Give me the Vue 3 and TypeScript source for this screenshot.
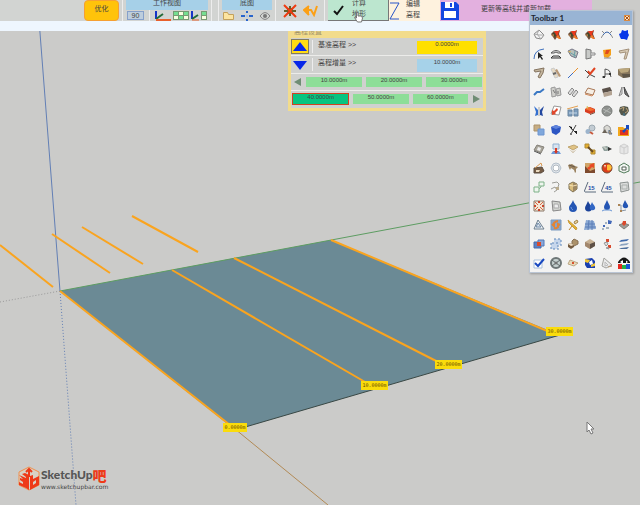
<script setup lang="ts">
import { ref } from 'vue'

// One stroke or area of an icon: path, fill, stroke, stroke width
type Shape = [string, string, string?, number?]
interface Tool { name: string; shapes: Shape[]; text?: string }

const N = 'none'

const rock: Shape[] = [
  ['M1 5 L4 2 L6 4 L10 1 L9 5 L11 10 L7 8 L5 11 L3 8 Z', '#6b4a34'],
  ['M4 2 L8 2 L10 1 L8 5 L10 9 L6 6 Z', '#e8381c'],
  ['M3 4 L5 4 L6 7 L3 8 Z', '#3f4a2c'],
  ['M8 6 L11 10 L9 10 L6 8 Z', '#f07a28'],
  ['M1 6 L4 5 L4 8 Z', '#a87848'],
]
const drop = 'M6 0 C7 4 10 5 10 8 A4 4 0 0 1 2 8 C2 5 5 4 6 0 Z'

const tools: Tool[] = [
  { name: 'Mesh', shapes: [['M1 5 L6 1 L11 6 L8 10 L3 9 Z', '#f4f4f4', '#888', 1], ['M1 5 L6 6 L11 6 M6 1 L4 5 L8 10', N, '#aaa', 1]] },
  { name: 'Rock', shapes: rock },
  { name: 'Rock split', shapes: rock },
  { name: 'Rock merge', shapes: rock },
  { name: 'Bridge arc', shapes: [['M2 6 Q6 0 10 6', N, '#3864a8', 1], ['M1 2 L3 4 M11 2 L9 4 M2 6 L0 9 M10 6 L12 9', N, '#888', 1]] },
  { name: 'Blue surface', shapes: [['M4 1 L7 2 L10 1 L10 4 L11 6 L10 8 L9 11 L6 10 L3 10 L2 8 L1 5 L3 4 Z', '#0838e8']] },
  { name: 'Arc select', shapes: [['M1 11 Q1 2 11 1', N, '#3f70bd', 1], ['M5 4 L5 11 L7 9 L9 12 L10 11 L8 8 L10 8 Z', '#222']] },
  { name: 'Double arc', shapes: [['M1 5 Q6 0 11 5 L8 5 Q6 3 4 5 Z', '#eee', '#555', 1], ['M1 10 L3 8 H9 L11 10 Z', '#ddd', '#333', 1]] },
  { name: 'Leaf mesh', shapes: [['M1 3 L5 1 L11 4 L9 10 L4 8 Z', '#b9c0bb', '#778', 1], ['M2 4 L9 8 M8 3 L7 9', N, '#6ba0a8', 1], ['M1 3 L4 3 L3 5 Z', '#dcb45c']] },
  { name: 'Panel', shapes: [['M2 1 L7 2 L7 10 L2 11 Z', '#c8cac8', '#777', 1], ['M7 5 L11 5 L11 7 L7 7', '#eee', '#888', 1]] },
  { name: 'Figure', shapes: [['M2 2 L10 1 L10 7 L7 10 L3 9 Z', '#f4a01c'], ['M5 2 L9 2 L7 6 L4 6 Z', '#e04a1e'], ['M3 10 L10 10', N, '#888', 1]] },
  { name: 'Angle', shapes: [['M1 3 L11 1 L8 11 L6 11 L8 4 L2 5 Z', '#d8cbb5', '#a3917a', 1]] },
  { name: 'Pipe', shapes: [['M1 3 L11 1 L10 6 L7 11 L5 10 L8 4 L2 5 Z', '#c4b69e', '#857460', 1]] },
  { name: 'Strips', shapes: [['M1 2 L4 1 L8 10 L5 11 Z', '#e8dcc4', '#ccc', 1], ['M5 3 L7 2 L11 9 L9 10 Z', '#b89876'], ['M3 7 L6 6', N, '#666', 2]] },
  { name: 'Line', shapes: [['M1 11 L6 6', N, '#3a6bc4', 1], ['M6 6 L11 1', N, '#e8902c', 1]] },
  { name: 'Trim', shapes: [['M1 3 L5 7 L11 10 M6 7 L3 11', N, '#444', 1], ['M4 4 L6 7 L11 1', N, '#e04422', 2]] },
  { name: 'Profile', shapes: [['M4 10 V2 Q10 3 9 7 H4 M4 10 H1 M9 7 L10 10', N, '#555', 1], ['M2 9 H4 V11 H2 Z M8 6 H10 V8 H8 Z', '#333']] },
  { name: 'Terrain block', shapes: [['M0 2 L12 1 L12 10 L5 11 L0 8 Z', '#87765c'], ['M0 2 L12 1 L10 5 L3 6 Z', '#bba77c'], ['M4 7 L12 7 L12 10 L5 11 Z', '#5f5648']] },
  { name: 'Wave', shapes: [['M1 9 L4 6 L7 6 L11 3', N, '#3a78c4', 2]] },
  { name: 'Documents', shapes: [['M1 2 L5 1 L6 10 L2 11 Z M6 3 L10 2 L11 9 L7 10 Z', '#d0d0cc', '#999', 1], ['M3 4 L5 7 M8 5 L8 8', N, '#777', 1]] },
  { name: 'Planks', shapes: [['M1 7 L5 2 L7 4 L3 9 Z M5 9 L9 4 L11 6 L7 11 Z', '#ddd', '#888', 1]] },
  { name: 'Slab', shapes: [['M4 2 L11 4 L9 9 L1 7 Z', '#f6eee4', '#a87858', 1], ['M1 8 L8 10 L10 8', N, '#d08858', 1]] },
  { name: 'Solid', shapes: [['M1 3 L9 1 L11 5 L2 7 Z', '#5a5048'], ['M2 7 L11 5 L11 9 L3 11 Z', '#b3a392']] },
  { name: 'Mirror', shapes: [['M4 1 L1 10 L4 8 Z', '#ddd', '#888', 1], ['M6 1 L7 8 L11 11 Z', '#777', '#444', 1]] },
  { name: 'Butterfly', shapes: [['M1 1 L5 5 L5 10 L2 11 L3 7 Z', '#3470d0'], ['M11 1 L7 5 L7 10 L10 11 L9 7 Z', '#2348a0'], ['M6 2 L6 11', N, '#aaa', 1]] },
  { name: 'Place', shapes: [['M4 1 L11 2 L9 10 L1 9 Z', '#fff', '#999', 1], ['M2 10 L2 5 L4 6 L7 3 L8 5 L5 8 L6 9 Z', '#e0482c']] },
  { name: 'Towers', shapes: [['M1 5 H5 V11 H1 Z M7 4 H11 V11 H7 Z', '#7d9dbd', '#6a86a0', 1], ['M0 4 L11 1', N, '#e2a052', 1], ['M2 8 H10', N, '#c6d8e8', 1]] },
  { name: 'Roof', shapes: [['M1 4 L6 2 L11 4 L11 7 L6 9 L1 7 Z', '#d83c20'], ['M1 4 L5 2 L11 5 L6 6 Z', '#f26f2f'], ['M6 9 L11 7 L11 8 L6 10 Z', '#774632'], ['M2 2 L4 1 L4 4 Z', '#d9be61']] },
  { name: 'Stone ball', shapes: [['M6 1 A5 5 0 1 1 6 11 A5 5 0 1 1 6 1 Z', '#8e918e', '#7a7d7a', 1], ['M2 4 L10 8 M3 8 L9 3', N, '#b7bab7', 1]] },
  { name: 'Grown ball', shapes: [['M6 1 L10 2 L11 6 L9 9 L7 11 L3 10 L1 6 L2 2 Z', '#55594c'], ['M2 4 L6 2 L5 6 M8 3 L10 6 L7 8', N, '#b9a178', 1], ['M6 8 L6 11', N, '#3f7fa0', 1]] },
  { name: 'Paste', shapes: [['M1 1 H7 V7 H1 Z', '#c6ad84', '#ab926a', 1], ['M5 5 H11 V11 H5 Z', '#80a8dc', '#6e96d0', 1]] },
  { name: 'Shield', shapes: [['M1 3 L6 1 L11 3 L10 8 L6 11 L2 9 Z', '#2c56c4'], ['M1 3 L6 1 L11 3 L6 5 Z', '#5f84dc']] },
  { name: 'Cut', shapes: [['M2 2 L10 10 M9 1 L4 10', N, '#444', 1], ['M2 2 L5 3 L5 6 Z M7 7 H10 V10 Z', '#222'], ['M3 9 H5 V11 H3 Z', '#777']] },
  { name: 'Spheres', shapes: [['M8 1 A3 3 0 1 1 8 7 A3 3 0 1 1 8 1 Z', '#c3ccd3', '#9eaab2', 1], ['M4 5 A2 2 0 1 1 4 10 A2 2 0 1 1 4 5 Z', '#9cb4cc'], ['M6 8 L9 10', N, '#c8593c', 2]] },
  { name: 'Pair', shapes: [['M6 1 L9 3 L10 7 L6 9 L3 7 L3 3 Z', '#d8d8d3', '#999', 1], ['M1 9 L4 5 L6 9 Z', '#6a6258'], ['M8 6 L11 10 L8 10 Z', '#d8a64c', '#63748f', 1]] },
  { name: 'Import', shapes: [['M0 3 H5 L6 4 H11 V12 H0 Z', '#f3a81c'], ['M2 6 H10 V11 H2 Z', '#e2351c'], ['M8 1 H11 V6 L9 5 L6 9 L4 7 L8 4 Z', '#174bc0']] },
  { name: 'Tile', shapes: [['M4 2 L11 4 L8 10 L1 7 Z', '#aaa69b', '#85827a', 1], ['M5 4 L8 5 L7 8 L4 7 Z', '#eee'], ['M1 8 L8 11', N, '#555', 1]] },
  { name: 'Push down', shapes: [['M3 1 H9 V6 H3 Z', '#d8e4f1', '#8fb0d0', 1], ['M1 11 L3 8 H9 L11 11 Z', '#6e9ad8'], ['M5 5 H7 V8 H8 L6 11 L4 8 H5 Z', '#d93a22']] },
  { name: 'Layers', shapes: [['M1 4 L7 2 L11 4 L6 7 Z', '#dfc284', '#c1a670', 1], ['M2 6 L6 9 L10 6 L6 10 Z', '#b9a37d']] },
  { name: 'Scale', shapes: [['M1 1 H5 V5 H1 Z M7 7 H11 V11 H7 Z', '#e3ac2c', '#af8a34', 1], ['M4 4 L9 9', N, '#694c22', 2]] },
  { name: 'Flow', shapes: [['M1 4 L6 3 L10 6 L6 8 L3 8 Z', '#8f9f9b'], ['M1 3 L6 5 L5 7 Z', '#c7cbc4'], ['M7 4 L11 6 L7 8 Z', '#333']] },
  { name: 'White cube', shapes: [['M2 3 L6 1 L10 3 L10 10 L6 11 L2 10 Z', '#e6e6e6', '#cfcfcf', 1], ['M2 3 L6 5 L10 3 M6 5 V11', N, '#ccc', 1]] },
  { name: 'Drawer', shapes: [['M1 6 L9 5 L11 9 L8 11 H1 Z', '#755c45', '#5b4c40', 1], ['M2 6 L8 1 L9 4', N, '#d99850', 1], ['M3 8 L7 8 L6 10 H3 Z', '#eadac0']] },
  { name: 'Ring', shapes: [['M6 1 L9 2 L11 6 L9 10 L6 11 L3 10 L1 6 L3 2 Z', '#e4e9ee', '#b4bfca', 1], ['M6 3 A3 3 0 1 1 6 9 A3 3 0 1 1 6 3 Z', '#fff', '#b0b8c0', 1]] },
  { name: 'Horse', shapes: [['M1 3 L5 2 L8 4 L11 5 L9 7 L9 10 L8 11 L7 8 L4 6 L3 8 L2 6 Z', '#9c8462'], ['M2 3 L8 5', N, '#6a5b49', 1]] },
  { name: 'Texture', shapes: [['M1 1 H11 V11 H1 Z', '#d0a468'], ['M1 4 L6 9 L11 7 V11 H1 Z', '#7d4a2f'], ['M5 3 L10 1 L10 6 L8 5 L5 8 L3 6 L6 4 Z', '#e84a25']] },
  { name: 'Fire ball', shapes: [['M6 1 A5 5 0 1 1 6 11 A5 5 0 1 1 6 1 Z', '#dc3d1b', '#73492f', 1], ['M6 3 A3 3 0 1 1 6 8 Z', '#ffbf36'], ['M3 3 L5 3 L4 6 Z', '#f5e6c6']] },
  { name: 'Hex box', shapes: [['M1 4 L6 1 L11 4 V9 L6 11 L1 9 Z', '#f0f4f0', '#547d5d', 1], ['M4 5 H8 V8 H4 Z', '#fff', '#525e54', 1]] },
  { name: 'Boxes', shapes: [['M6 1 H11 V5 H6 Z M1 6 H6 V11 H1 Z', '#eef5ee', '#7db187', 1], ['M6 8 L8 6 V5', N, '#8ab191', 1]] },
  { name: 'Curves', shapes: [['M2 2 L7 1 L9 3 L8 6 M1 8 L5 6 L7 9 L4 11', N, '#9c9c96', 1], ['M6 6 H9 V9 H6 Z', '#b9ab8d']] },
  { name: 'Wood ball', shapes: [['M6 1 L10 3 V8 L6 11 L2 8 V3 Z', '#d9bd7e', '#7c7055', 1], ['M6 1 V11 L10 8 V3 Z', '#9d8762'], ['M2 4 L6 5 L10 4', N, '#f3deb0', 1]] },
  { name: 'Slope 15', shapes: [['M0 11 L4 1 M1 11 H12', N, '#5a6a7d', 1]], text: '15' },
  { name: 'Slope 45', shapes: [['M0 11 L4 1 M1 11 H12', N, '#5a6a7d', 1]], text: '45' },
  { name: 'Wire box', shapes: [['M2 2 L10 1 L11 9 L3 11 Z', '#dcdedd', '#8c9290', 1], ['M4 4 H9 V8 H4 Z', N, '#abb0ad', 1]] },
  { name: 'Explode', shapes: [['M1 1 H11 V11 H1 Z', '#f3e7d6', '#8b7969', 1], ['M2 2 L5 5 M10 2 L7 5 M2 10 L5 7 M10 10 L7 7', N, '#d66a49', 1], ['M5 1 H7 V3 H5 Z M5 9 H7 V11 H5 Z M1 5 H3 V7 H1 Z M9 5 H11 V7 H9 Z', '#c8452c']] },
  { name: 'Sheet', shapes: [['M2 1 L10 2 L11 10 L3 11 Z', '#d4d6d2', '#888', 1], ['M4 4 L8 4 L9 8 L4 8 Z', '#eee', '#aaa', 1]] },
  { name: 'Drop', shapes: [[drop, '#2456b4'], ['M4 7 Q4 9 6 10', N, '#6f9ae0', 1]] },
  { name: 'Drops', shapes: [['M4 1 C5 4 8 6 8 8 A3 3 0 0 1 1 8 C1 6 3 4 4 1 Z', '#1c439a'], ['M8 2 C9 5 12 6 11 9 A3 3 0 0 1 6 9 C5 7 7 5 8 2 Z', '#3267c5']] },
  { name: 'Drop on ground', shapes: [['M6 0 C7 3 9 5 9 7 A3 3 0 0 1 3 7 C3 5 5 3 6 0 Z', '#2456b4'], ['M1 11 L3 10 H9 L11 11', N, '#6794d4', 1]] },
  { name: 'Drop path', shapes: [['M7 0 C8 3 11 5 10 7 A3 3 0 0 1 5 7 C4 5 6 3 7 0 Z', '#2456b4'], ['M1 5 L3 5 L3 11 L8 10', N, '#8896a6', 1], ['M0 4 H2 V6 H0 Z M2 10 H4 V12 H2 Z', '#aa8456']] },
  { name: 'Triangulate', shapes: [['M5 1 L11 10 L1 10 Z', '#f0f4f6', '#6e8090', 1], ['M5 4 L8 8 L3 8 Z', '#dde6ee', '#6e88a7', 1]] },
  { name: 'Swap', shapes: [['M1 1 H11 V11 H1 Z', '#86a5c9', '#7d9bc0', 1], ['M2 5 L4 7 L4 4 Q6 2 8 2 M10 6 L8 5 L8 8 Q6 10 4 9', N, '#e38434', 2]] },
  { name: 'Hammer', shapes: [['M1 1 L10 9 L9 11 L2 4 Z', '#e5b32e', '#c89b3e', 1], ['M7 3 L10 1 L11 3 L8 5 Z', '#ead69e', '#a2834b', 1], ['M2 11 L5 7', N, '#bd8732', 1]] },
  { name: 'Grid', shapes: [['M2 1 L10 2 L12 10 L0 11 Z', '#8ba9d3'], ['M1 5 L11 5 M1 8 L12 8 M5 1 L4 11 M8 1 L8 11', N, '#5d7fb8', 1]] },
  { name: 'Scatter', shapes: [['M7 1 L11 2 L10 5 L7 5 Z M2 6 H4 V8 H2 Z', '#4268b8'], ['M1 9 H3 V11 H1 Z M5 8 H8 V10 H5 Z M4 3 H6 V5 H4 Z', '#a8b4be']] },
  { name: 'Stamp', shapes: [['M1 6 L6 4 L11 6 L6 10 Z', '#9c9c97', '#808078', 1], ['M5 2 H8 V5 L6 7 L4 5 Z', '#da4a2c']] },
  { name: 'Overlap', shapes: [['M1 4 H8 V10 H1 Z', '#5c81c4', '#466aaa', 1], ['M5 2 H11 V8 H5 Z', '#88a6d8', '#5378b8', 1], ['M4 4 H8 V8 H4 Z', '#d84b2b']] },
  { name: 'Dashed overlap', shapes: [['M4 1 H11 V7 H8 V11 H1 V5 H4 Z', '#c6d6ec'], ['M4 1 H6 M8 1 H10 M11 2 V4 M11 6 V8 M1 5 V7 M1 9 V11 M3 11 H5 M7 11 H9 M2 5 H4 M6 5 H8 M8 7 V9', N, '#5d86ba', 1]] },
  { name: 'Crates', shapes: [['M7 1 L11 3 V6 L7 8 L5 7 V3 Z', '#ab916a', '#887154', 1], ['M3 5 L7 7 V9 L4 11 L1 9 V6 Z', '#745b41'], ['M1 6 L3 5 L7 7 L4 8 Z', '#ebdac0']] },
  { name: 'Cube', shapes: [['M1 4 L6 1 L11 4 V8 L6 11 L1 8 Z', '#c7b194'], ['M6 6 L11 4 V8 L6 11 Z', '#5d5046'], ['M1 4 L6 6 V11 L1 8 Z', '#a2876d']] },
  { name: 'Beads', shapes: [['M5 1 H8 V4 H5 Z M7 7 H10 V10 H7 Z', '#d94a2d'], ['M3 5 L6 4 L7 6 L5 8 Z M5 10 L7 9 L8 11 Z', '#ddd', '#999', 1]] },
  { name: 'Stack', shapes: [['M3 2 L11 1 L9 3 L1 4 Z', '#416bab'], ['M3 6 L11 5 L9 7 L1 8 Z', '#8ba3bf'], ['M3 10 L11 9 L9 11 L1 11 Z', '#4d6f9c']] },
  { name: 'Check', shapes: [['M1 3 H9 V11 H1 Z', '#fff', '#a9c0dc', 1], ['M2 6 L5 9 L11 2', N, '#1848c0', 2]] },
  { name: 'Rosette', shapes: [['M6 1 A5 5 0 1 1 6 11 A5 5 0 1 1 6 1 Z', '#c5d0cf', '#6d7676', 2], ['M2 3 L10 9 M10 3 L2 9', N, '#5d6666', 1], ['M6 5 A1 1 0 1 1 6 7 A1 1 0 1 1 6 5 Z', '#eee', '#555', 1]] },
  { name: 'Card', shapes: [['M3 3 L11 6 L7 9 L1 7 Z', '#e8d9b9', '#baa684', 1], ['M5 5 H7 V7 H5 Z', '#d8512e']] },
  { name: 'Picture', shapes: [['M1 2 L8 1 L11 4 V11 H3 L1 8 Z', '#1a40b0'], ['M1 2 L6 3 L4 6 L1 5 Z M7 8 L11 6 V9 L7 10 Z', '#f3c633'], ['M5 5 L8 3 L9 7 L6 8 Z', '#fff']] },
  { name: 'Set square', shapes: [['M3 1 L11 8 L5 11 L1 9 Z', '#eaeaea', '#a2a29e', 1], ['M4 5 L7 8 L4 9 Z', N, '#bbb', 1], ['M7 10 L11 9', N, '#b89672', 1]] },
  { name: 'Colour eye', shapes: [['M0 5 Q6 -4 12 5 V6 H0 Z', '#161616'], ['M2 5 Q6 1 10 5 Q6 8 2 5 Z', '#fff'], ['M5 3 H8 V6 H5 Z', '#111'], ['M0 7 H4 V12 H0 Z', '#e42a20'], ['M4 8 H8 V12 H4 Z', '#24b348'], ['M8 7 H12 V12 H8 Z', '#1b56d8']] },
]

const contourLines = [
  'M0 245 L53 287', 'M52 234 L110 273', 'M82 227 L143 264', 'M132 216 L198 252',
  'M60 291 L235 429', 'M172 270 L372 386', 'M234 258 L442 364', 'M331 240 L552 333',
]
const tags = [
  { x: 223, y: 423, w: 24, text: '0.0000m' },
  { x: 361, y: 381, w: 27, text: '10.0000m' },
  { x: 435, y: 360, w: 27, text: '20.0000m' },
  { x: 546, y: 327, w: 27, text: '30.0000m' },
]

const angle = ref('90')
const base = ref('0.0000m')
const step = ref('10.0000m')
const selected = ref('40.0000m')
</script>

<template>
  <main class="app">
    <svg class="scene" viewBox="0 0 640 505" preserveAspectRatio="xMidYMid slice">
      <path d="M60 291 L0 302" class="dotted grey" />
      <path d="M60 291 L76 505" class="dotted blue" />
      <path d="M39 20 L60 291" class="axis blue" />
      <path d="M235 429 L328 505" class="axis brown" />
      <path d="M60 291 L331 240 L560 335 L235 430 Z" fill="#6b8a95" />
      <path d="M560 335 L235 430" class="axis edge" />
      <path d="M60 291 L640 182" class="axis green" />
      <path v-for="line in contourLines" :key="line" :d="line" class="contour" />
      <g v-for="tag in tags" :key="tag.text">
        <rect :x="tag.x" :y="tag.y" :width="tag.w" height="9" fill="#fadc0c" />
        <text :x="tag.x + tag.w / 2" :y="tag.y + 6" class="tag">{{ tag.text }}</text>
      </g>
      <path d="M587 422 V432 L589 430 L591 434 L593 433 L591 429 H594 Z" fill="#fff" stroke="#777" />
    </svg>

    <header class="ribbon">
      <button class="optimise">优化</button>
      <i class="sep"></i>
      <section class="group views">
        <h2>工作视图</h2>
        <div class="icons">
          <input v-model="angle" aria-label="视角" class="angle" />
          <i class="sep"></i>
          <button aria-label="坐标轴">
            <svg width="16" height="10" viewBox="0 0 16 10"><path d="M1 0 V8" stroke="#1634c8" stroke-width="2" /><path d="M1 8 L8 3" stroke="#236b3a" stroke-width="2" /><path d="M1 9 H16" stroke="#e8602c" stroke-width="2" /></svg>
          </button>
          <button aria-label="四视图">
            <svg width="16" height="10" viewBox="0 0 16 10"><path d="M0 0 H16 V9 H0 Z" fill="#789a74" /><path d="M1 1 H5 V4 H1 Z M11 1 H15 V4 H11 Z M6 5 H10 V8 H6 Z" fill="#75df91" /><path d="M6 1 H10 V4 H6 Z M1 5 H5 V8 H1 Z M11 5 H15 V8 H11 Z" fill="#f9ffe2" /></svg>
          </button>
          <button aria-label="局部坐标轴">
            <svg width="8" height="10" viewBox="0 0 8 10"><path d="M1 0 V8" stroke="#1634c8" stroke-width="2" /><path d="M1 8 L7 4" stroke="#236b3a" stroke-width="2" /><path d="M1 9 H8" stroke="#e8602c" /></svg>
          </button>
          <button aria-label="双视图">
            <svg width="6" height="10" viewBox="0 0 6 10"><path d="M0 0 H6 V9 H0 Z" fill="#789a74" /><path d="M1 1 H5 V4 H1 Z" fill="#75df91" /><path d="M1 5 H5 V8 H1 Z" fill="#f9ffe2" /></svg>
          </button>
        </div>
      </section>
      <i class="sep"></i>
      <i class="sep"></i>
      <section class="group basemap">
        <h2>底图</h2>
        <div class="icons">
          <button aria-label="打开">
            <svg width="11" height="9" viewBox="0 0 11 9"><path d="M0.5 8.5 V1.5 H4.5 L5.5 3.5 H10.5 V8.5 Z" fill="#fce4a0" stroke="#c3a15c" /></svg>
          </button>
          <button aria-label="定位">
            <svg width="12" height="10" viewBox="0 0 12 10"><path d="M0 5 H4 M8 5 H12 M6 0 V2 M6 8 V10" stroke="#2864cc" stroke-width="2" /><path d="M5 4 H7 V6 H5 Z" fill="#a9c2e8" /></svg>
          </button>
          <button aria-label="显示">
            <svg width="12" height="10" viewBox="0 0 12 10"><path d="M1 5 Q6 -2 11 5 Q6 12 1 5 Z" fill="none" stroke="#858585" /><circle cx="6" cy="5" r="2" fill="#777" /></svg>
          </button>
        </div>
      </section>
      <i class="sep"></i>
      <button class="action" aria-label="清除">
        <svg width="14" height="14" viewBox="0 0 14 14"><path d="M4 4 H10 V10 H4 Z" fill="#3e5c31" /><path d="M1 7 H13 M7 2 V12" stroke="#66602a" stroke-width="2" /><path d="M1 1 L13 13 M13 1 L1 13" stroke="#ee3b12" stroke-width="2" /></svg>
      </button>
      <button class="action" aria-label="返回">
        <svg width="16" height="12" viewBox="0 0 16 12"><path d="M6 1 L1 5 L6 10 M2 5 H8 L11 10 L14 1" fill="none" stroke="#fca016" stroke-width="2" /><path d="M1 5 L6 1 V10 Z" fill="#fca016" /></svg>
      </button>
      <i class="sep"></i>
      <button class="wide compute">
        <svg width="11" height="11" viewBox="0 0 11 11"><path d="M1 6 L4 9 L10 1" fill="none" stroke="#121212" stroke-width="2" /></svg>
        <span>计算<br />地形</span>
        <svg class="hand" width="9" height="12" viewBox="0 0 9 12"><path d="M2.5 7 V1.5 H4 V5 H7.5 L8.5 7 L7.5 11 H3.5 L0.5 6.5 Z" fill="#fff" stroke="#777" /></svg>
      </button>
      <button class="wide edit">
        <svg width="11" height="18" viewBox="0 0 11 18"><path d="M1 1 H10 L1 17 H10" fill="none" stroke="#2854c8" /></svg>
        <span>编辑<br />高程</span>
      </button>
      <button class="reload">
        <svg width="18" height="18" viewBox="0 0 18 18"><path d="M0 0 H15 L18 3 V18 H0 Z" fill="#1446e0" /><path d="M4 0 H13 V6 H4 Z M3 9 H15 V16 H3 Z" fill="#fff" /><path d="M9 1 H11 V5 H9 Z" fill="#1446e0" /></svg>
        <span>更新等高线并重新加载</span>
      </button>
    </header>

    <form class="panel" @submit.prevent>
      <h2>高程设置</h2>
      <div class="fields">
        <div class="field">
          <button type="button" class="up" aria-label="升高"><svg width="14" height="10" viewBox="0 0 14 10"><path d="M7 0 L14 9 H0 Z" fill="#0726e8" /></svg></button>
          <i class="sep"></i>
          <label for="base">基准高程 &gt;&gt;</label>
          <input id="base" v-model="base" class="base" />
        </div>
        <div class="field">
          <button type="button" aria-label="降低"><svg width="14" height="10" viewBox="0 0 14 10"><path d="M7 10 L14 1 H0 Z" fill="#0726e8" /></svg></button>
          <i class="sep"></i>
          <label for="step">高程增量 &gt;&gt;</label>
          <input id="step" v-model="step" class="step" />
        </div>
        <div class="chips">
          <button type="button" class="arrow" aria-label="上一页"><svg width="7" height="8" viewBox="0 0 7 8"><path d="M7 0 V8 L0 4 Z" fill="#6f8d74" /></svg></button>
          <button v-for="v in ['10.0000m', '20.0000m', '30.0000m']" :key="v" type="button" class="chip" :class="{ on: selected === v }" @click="selected = v">{{ v }}</button>
        </div>
        <div class="chips">
          <button v-for="v in ['40.0000m', '50.0000m', '60.0000m']" :key="v" type="button" class="chip" :class="{ on: selected === v }" @click="selected = v">{{ v }}</button>
          <button type="button" class="arrow" aria-label="下一页"><svg width="7" height="8" viewBox="0 0 7 8"><path d="M0 0 V8 L7 4 Z" fill="#6f8d74" /></svg></button>
        </div>
      </div>
    </form>

    <aside class="toolbox">
      <header>
        <h2>Toolbar 1</h2>
        <button class="close" aria-label="Close"><svg width="4" height="4" viewBox="0 0 4 4"><path d="M0 0 L4 4 M4 0 L0 4" stroke="#a4501c" /></svg></button>
      </header>
      <div class="tools">
        <button v-for="tool in tools" :key="tool.name" :aria-label="tool.name">
          <svg width="12" height="12" viewBox="0 0 12 12">
            <path v-for="(s, i) in tool.shapes" :key="i" :d="s[0]" :fill="s[1]" :stroke="s[2] ?? 'none'" :stroke-width="s[3] ?? 0" />
            <text v-if="tool.text" x="4" y="9" class="num">{{ tool.text }}</text>
          </svg>
        </button>
      </div>
    </aside>

    <footer class="brand">
      <svg width="22" height="25" viewBox="0 0 22 25">
        <path d="M11 1 L21 6 V19 L11 24 L1 19 V6 Z" fill="#d8d3c6" stroke="#f0904c" />
        <path d="M1 9 L8 12 V22 L1 19 V16 L5 18 V16 L2 14 V12 L5 13 Z" fill="#ee3a18" />
        <path d="M4 8 L7 7 L11 9 V24 L8 22 V11 Z" fill="#ee3a18" />
        <path d="M12 24 V10 L15 9 V13 L21 10 V19 Z M15 16 V19 L18 17 V14 Z" fill="#ee3a18" fill-rule="evenodd" />
        <path d="M11 11 V4 M8 6 L11 3 L14 6" fill="none" stroke="#ee3a18" stroke-width="2" />
      </svg>
      <div>
        <p class="name">SketchUp<b>吧</b></p>
        <p class="site">www.sketchupbar.com</p>
      </div>
    </footer>
  </main>
</template>

<style>
body {
  margin: 0;
}
</style>

<style scoped>
.app {
  position: relative;
  display: flex;
  flex-direction: column;
  min-height: 100vh;
  overflow: hidden;
  background: #cbcbc9;
  color: #444;
  font-family: "Liberation Sans", "Noto Sans CJK SC", sans-serif;
  font-size: 7px;
}
h2, p {
  margin: 0;
  font-size: inherit;
  font-weight: 400;
}
button, input {
  box-sizing: border-box;
  margin: 0;
  padding: 0;
  border: 0;
  background: none;
  color: inherit;
  font: inherit;
}
svg {
  display: block;
}
.scene {
  position: absolute;
  inset: 0;
  width: 100%;
  height: 100%;
}
.axis, .dotted, .contour {
  fill: none;
  stroke-width: 1;
}
.dotted {
  stroke-dasharray: 1 2;
}
.blue {
  stroke: #627fb5;
}
.grey {
  stroke: #999;
}
.brown {
  stroke: #b28a55;
}
.green {
  stroke: #5d9d62;
}
.edge {
  stroke: #394845;
}
.contour {
  stroke: #faa41e;
  stroke-width: 2;
}
.tag {
  fill: #6a4b00;
  font-family: "DejaVu Sans Mono", monospace;
  font-size: 5px;
  text-anchor: middle;
}

.ribbon {
  position: relative;
  display: flex;
  height: 21px;
  margin-right: 48px;
  padding-left: 84px;
  border-bottom: 10px solid #eef6fe;
  background: #d2d4d2;
}
.sep {
  flex: none;
  width: 1px;
  margin: 0 3px;
  background: #ededed;
}
.optimise {
  width: 35px;
  padding-bottom: 5px;
  border: 1px solid #f6a032;
  border-radius: 4px;
  background: #ffc30a;
}
.group h2 {
  height: 10px;
  background: #a6d0e8;
  line-height: 6px;
  text-align: center;
}
.views {
  width: 82px;
}
.basemap {
  width: 50px;
}
.icons {
  display: flex;
  align-items: center;
  justify-content: space-between;
  height: 11px;
  padding: 0 1px;
}
.icons .sep {
  align-self: stretch;
}
.angle {
  width: 17px;
  height: 9px;
  border: 1px solid #86a0ca;
  background: #bdcddd;
  line-height: 7px;
  text-align: center;
}
.action {
  display: grid;
  place-items: center;
  width: 21px;
}
.wide {
  position: relative;
  display: flex;
  align-items: center;
  line-height: 11px;
}
.wide span {
  height: 26px;
}
.compute {
  width: 61px;
  gap: 8px;
  padding-left: 5px;
  border-right: 1px solid #777;
  border-bottom: 1px solid #777;
  background: #bce6cf;
}
.hand {
  position: absolute;
  top: 11px;
  left: 26px;
}
.edit {
  width: 51px;
  gap: 6px;
  background: #fef2de;
}
.reload {
  display: flex;
  flex: 1;
  align-items: center;
  gap: 22px;
  padding-left: 1px;
  background: #e3b0df;
}
.reload span {
  padding-bottom: 5px;
}

.panel {
  position: absolute;
  top: 31px;
  left: 45%;
  box-sizing: border-box;
  width: 198px;
  padding: 0 3px 3px;
  background: #f2dc8c;
}
.panel h2 {
  height: 7px;
  padding-left: 3px;
  overflow: hidden;
  color: #a3946a;
  line-height: 1px;
}
.fields {
  padding-bottom: 1px;
  background: #d0d1cf;
}
.field {
  display: flex;
  height: 17px;
  border-bottom: 1px solid #ececea;
}
.field button {
  display: grid;
  place-items: center;
  width: 18px;
}
.field .up {
  margin: 1px 0;
  border: 1px solid #827b5e;
  background: #ffdc12;
}
.field .sep {
  margin: 2px 3px;
}
.field label {
  flex: 1;
  padding-left: 2px;
  line-height: 13px;
}
.field input {
  width: 60px;
  height: 13px;
  margin: 3px 6px 0 0;
  padding-bottom: 7px;
  font-size: 6px;
  text-align: center;
}
.field .base {
  background: #ffe000;
}
.field .step {
  background: #a6d2e9;
}
.chips {
  display: flex;
  align-items: center;
  gap: 4px;
  height: 16px;
  padding: 0 1px 0 2px;
  border-bottom: 1px solid #ececea;
}
.chips:last-child {
  padding: 0 2px 0 1px;
  border: 0;
}
.arrow {
  display: grid;
  place-items: center;
  width: 9px;
}
.chip {
  flex: 1;
  height: 10px;
  padding-bottom: 4px;
  background: #8dde98;
  font-size: 6px;
  line-height: 6px;
}
.chip.on {
  height: 12px;
  border: 1px solid #d34220;
  background: #08c480;
}

.toolbox {
  position: absolute;
  top: 10px;
  right: 7px;
  box-sizing: border-box;
  width: 104px;
  border: 1px solid #bac5d4;
  background: #f3f3f2;
  box-shadow: 1px 1px 2px #999;
}
.toolbox header {
  display: flex;
  align-items: center;
  justify-content: space-between;
  height: 14px;
  padding: 0 2px 0 1px;
  background: #99b4d4;
}
.toolbox h2 {
  color: #1c2430;
  font-family: Lato, sans-serif;
  font-size: 8px;
  font-weight: 700;
}
.close {
  border: 1px solid #d98a42;
  background: #ffe3bb;
}
.tools {
  display: grid;
  grid-template-columns: repeat(6, 1fr);
  grid-auto-rows: 19px;
}
.tools button {
  display: grid;
  place-items: center;
}
.num {
  fill: #2450a8;
  font-size: 6px;
  font-weight: 700;
}

.brand {
  position: relative;
  display: flex;
  gap: 1px;
  margin-top: auto;
  padding: 0 0 14px 18px;
}
.name {
  display: flex;
  align-items: center;
  height: 17px;
  color: #555;
  font-family: Lato, sans-serif;
  font-size: 12px;
  font-weight: 900;
}
.name b {
  color: #ee3a18;
  font-family: "Noto Sans CJK SC", sans-serif;
  font-size: 14px;
  line-height: 14px;
}
.site {
  font-family: "DejaVu Sans", sans-serif;
  font-size: 6px;
  line-height: 8px;
}
</style>
